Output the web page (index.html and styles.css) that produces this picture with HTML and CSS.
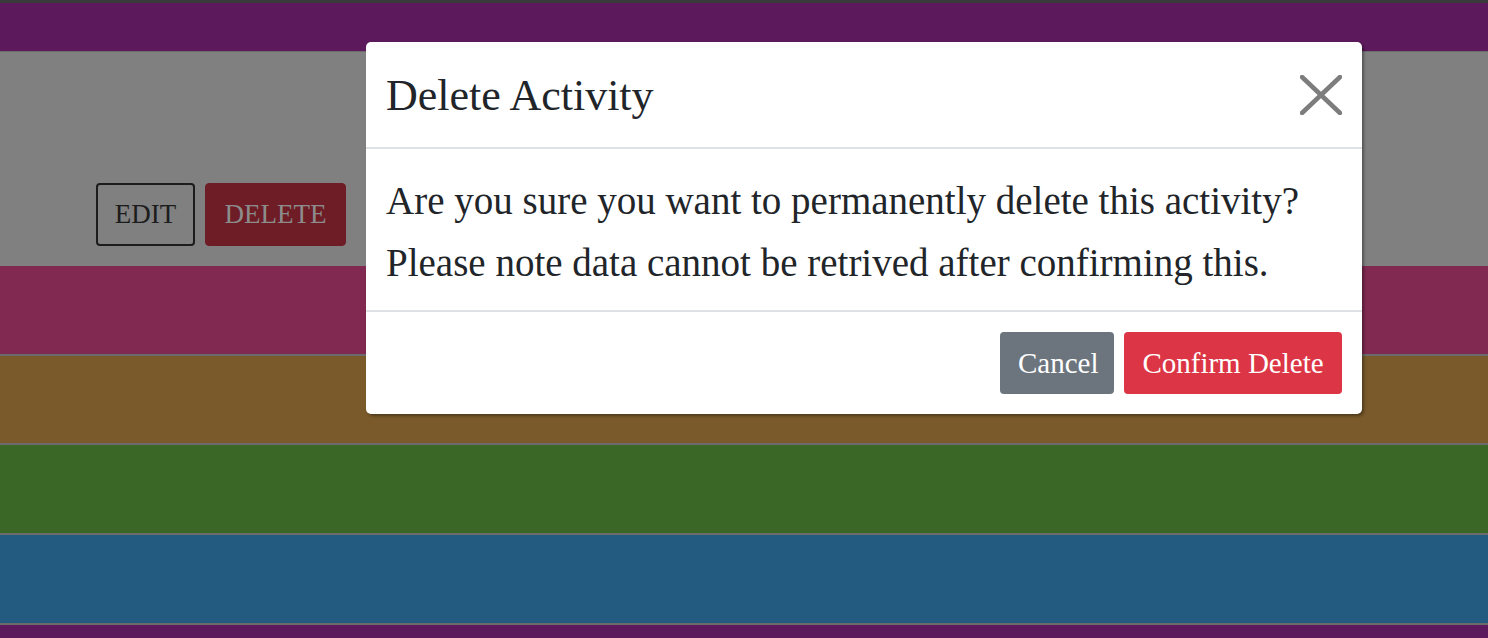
FILE: index.html
```html
<!DOCTYPE html>
<html>
<head>
<meta charset="utf-8">
<link rel="stylesheet" href="styles.css">
</head>
<body>
<div class="page">
  <div class="topline"></div>
  <div class="band band-purple"></div>
  <div class="band band-gray">
    <div class="actions">
      <button class="btn-edit">EDIT</button>
      <button class="btn-del">DELETE</button>
    </div>
  </div>
  <div class="band band-magenta"></div>
  <div class="band band-brown"></div>
  <div class="band band-green"></div>
  <div class="band band-blue"></div>
  <div class="band band-purple2"></div>
</div>
<div class="modal">
  <div class="modal-header">
    <h5 class="modal-title">Delete Activity</h5>
    <span class="close"><svg width="42" height="40" viewBox="0 0 42 40"><path d="M2 2 L40 38 M40 2 L2 38" stroke="#7d7d7d" stroke-width="4.5" stroke-linecap="round"/></svg></span>
  </div>
  <div class="modal-body">
    <p>Are you sure you want to permanently delete this activity?</p>
    <p>Please note data cannot be retrived after confirming this.</p>
  </div>
  <div class="modal-footer">
    <button class="btn btn-cancel">Cancel</button>
    <button class="btn btn-confirm">Confirm Delete</button>
  </div>
</div>
</body>
</html>
```
FILE: styles.css
```css
html, body { margin: 0; padding: 0; }
body { font-family: "Liberation Serif", "DejaVu Serif", serif; width: 1488px; height: 638px; overflow: hidden; position: relative; background: #808080; }
.page { display: flex; flex-direction: column; }
.topline { height: 3px; background: #3a3a3a; }
.band { box-sizing: border-box; }
.band-purple { height: 49px; background: #5c1a5c; border-bottom: 1px solid #6b6b6b; }
.band-gray { height: 214px; background: #808080; display: flex; align-items: flex-end; padding: 0 0 20px 96px; }
.band-magenta { height: 90px; background: #812950; border-bottom: 2px solid #6b6b6b; }
.band-brown { height: 89px; background: #7a5a2b; border-bottom: 2px solid #6b6b6b; }
.band-green { height: 90px; background: #3a6726; border-bottom: 2px solid #6b6b6b; }
.band-blue { height: 90px; background: #235b80; border-bottom: 2px solid #6b6b6b; }
.band-purple2 { height: 40px; background: #5c1a5c; }
.actions { display: flex; gap: 10px; }
.actions button { font-family: inherit; font-size: 27px; height: 63px; box-sizing: border-box; border-radius: 4px; padding: 0 15px; }
.btn-edit { background: transparent; border: 2px solid #1c1c1c; color: #1c1c1c; width: 99px; }
.btn-del { background: #6e1c25; border: 1px solid #6e1c25; color: #8c8c8c; width: 141px; }

.modal { position: absolute; left: 366px; top: 42px; width: 996px; background: #fff; border-radius: 5px; box-shadow: 2px 2px 3px rgba(0,0,0,0.35); color: #212529; }
.modal-header { display: flex; align-items: center; justify-content: space-between; padding: 20px; height: 107px; box-sizing: border-box; border-bottom: 2px solid #dee2e6; }
.modal-title { margin: 0; font-size: 44px; font-weight: normal; line-height: 1.5; padding-top: 3px; }
.close { display: flex; margin-top: 0; }
.modal-body { padding: 21px 20px 20px; height: 161px; box-sizing: border-box; }
.modal-body p { margin: 0; font-size: 39px; line-height: 62px; }
.modal-footer { display: flex; justify-content: flex-end; gap: 10px; padding: 20px; border-top: 2px solid #dee2e6; }
.btn { font-family: inherit; font-size: 29px; height: 62px; border: none; border-radius: 4px; color: #fff; padding: 0 18px; }
.btn-cancel { background: #6c757d; width: 114px; }
.btn-confirm { background: #dc3545; width: 218px; }
```
